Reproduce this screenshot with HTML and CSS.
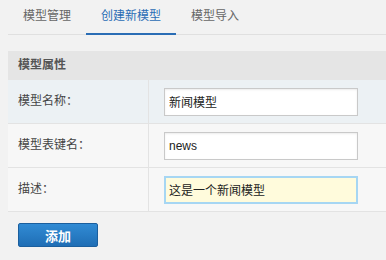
FILE: index.html
```html
<!DOCTYPE html>
<html lang="zh-CN">
<head>
  <meta charset="UTF-8">
  <title>创建新模型</title>
  <link rel="stylesheet" href="styles.css">
</head>
<body>
  <div class="tabs">
    <a class="tab">模型管理</a>
    <a class="tab active">创建新模型</a>
    <a class="tab">模型导入</a>
  </div>

  <form class="panel">
    <div class="panel-head">模型属性</div>

    <div class="row hover">
      <div class="label">模型名称：</div>
      <div class="field"><input type="text" value="新闻模型"></div>
    </div>
    <div class="row">
      <div class="label">模型表键名：</div>
      <div class="field"><input type="text" value="news"></div>
    </div>
    <div class="row">
      <div class="label">描述：</div>
      <div class="field"><input type="text" class="focus" value="这是一个新闻模型"></div>
    </div>

    <button type="button" class="btn">添加</button>
  </form>
</body>
</html>
```

FILE: styles.css
```css
* { box-sizing: border-box; }
body {
  margin: 0;
  background: #f2f2f2;
  font-family: "Liberation Sans", "Noto Sans CJK SC", sans-serif;
  font-size: 12px;
  color: #444;
}
.tabs {
  display: flex;
  height: 35px;
  margin-left: 8px;
  border-bottom: 1px solid #e0e0e0;
}
.tab {
  padding: 0 15px;
  line-height: 33px;
  height: 35px;
  margin-bottom: -1px;
  color: #666;
  border-bottom: 2px solid transparent;
}
.tab.active {
  color: #2a6db5;
  border-bottom-color: #2a6db5;
}
.panel {
  margin: 16px 0 0 8px;
}
.panel-head {
  height: 29px;
  line-height: 29px;
  padding-left: 10px;
  background: #e5e5e5;
  color: #555;
  font-weight: bold;
}
.row {
  display: flex;
  height: 44px;
  background: #f7f7f7;
  border-bottom: 1px solid #e3e3e3;
}
.row.hover {
  background: #ecf1f4;
}
.label {
  width: 141px;
  padding-left: 10px;
  line-height: 43px;
  border-right: 1px solid #e3e3e3;
  color: #444;
}
.field {
  display: flex;
  align-items: center;
  padding-left: 15px;
}
.field input {
  width: 194px;
  height: 28px;
  padding: 0 4px;
  border: 1px solid #c9c9c9;
  box-shadow: inset 0 1px 2px rgba(0, 0, 0, 0.08);
  background: #fff;
  font-family: inherit;
  font-size: 12px;
  color: #222;
  outline: none;
}
.field input.focus {
  border: 2px solid #a6d6f3;
  padding: 0 3px;
  background: #fffbdc;
  box-shadow: none;
}
.btn {
  display: block;
  width: 80px;
  height: 24px;
  margin: 11px 0 0 10px;
  border: 1px solid #1b5f9e;
  border-radius: 2px;
  background: linear-gradient(#318bd4, #1f6eb5);
  color: #fff;
  font-family: inherit;
  font-size: 13px;
  font-weight: bold;
  cursor: pointer;
}
```
